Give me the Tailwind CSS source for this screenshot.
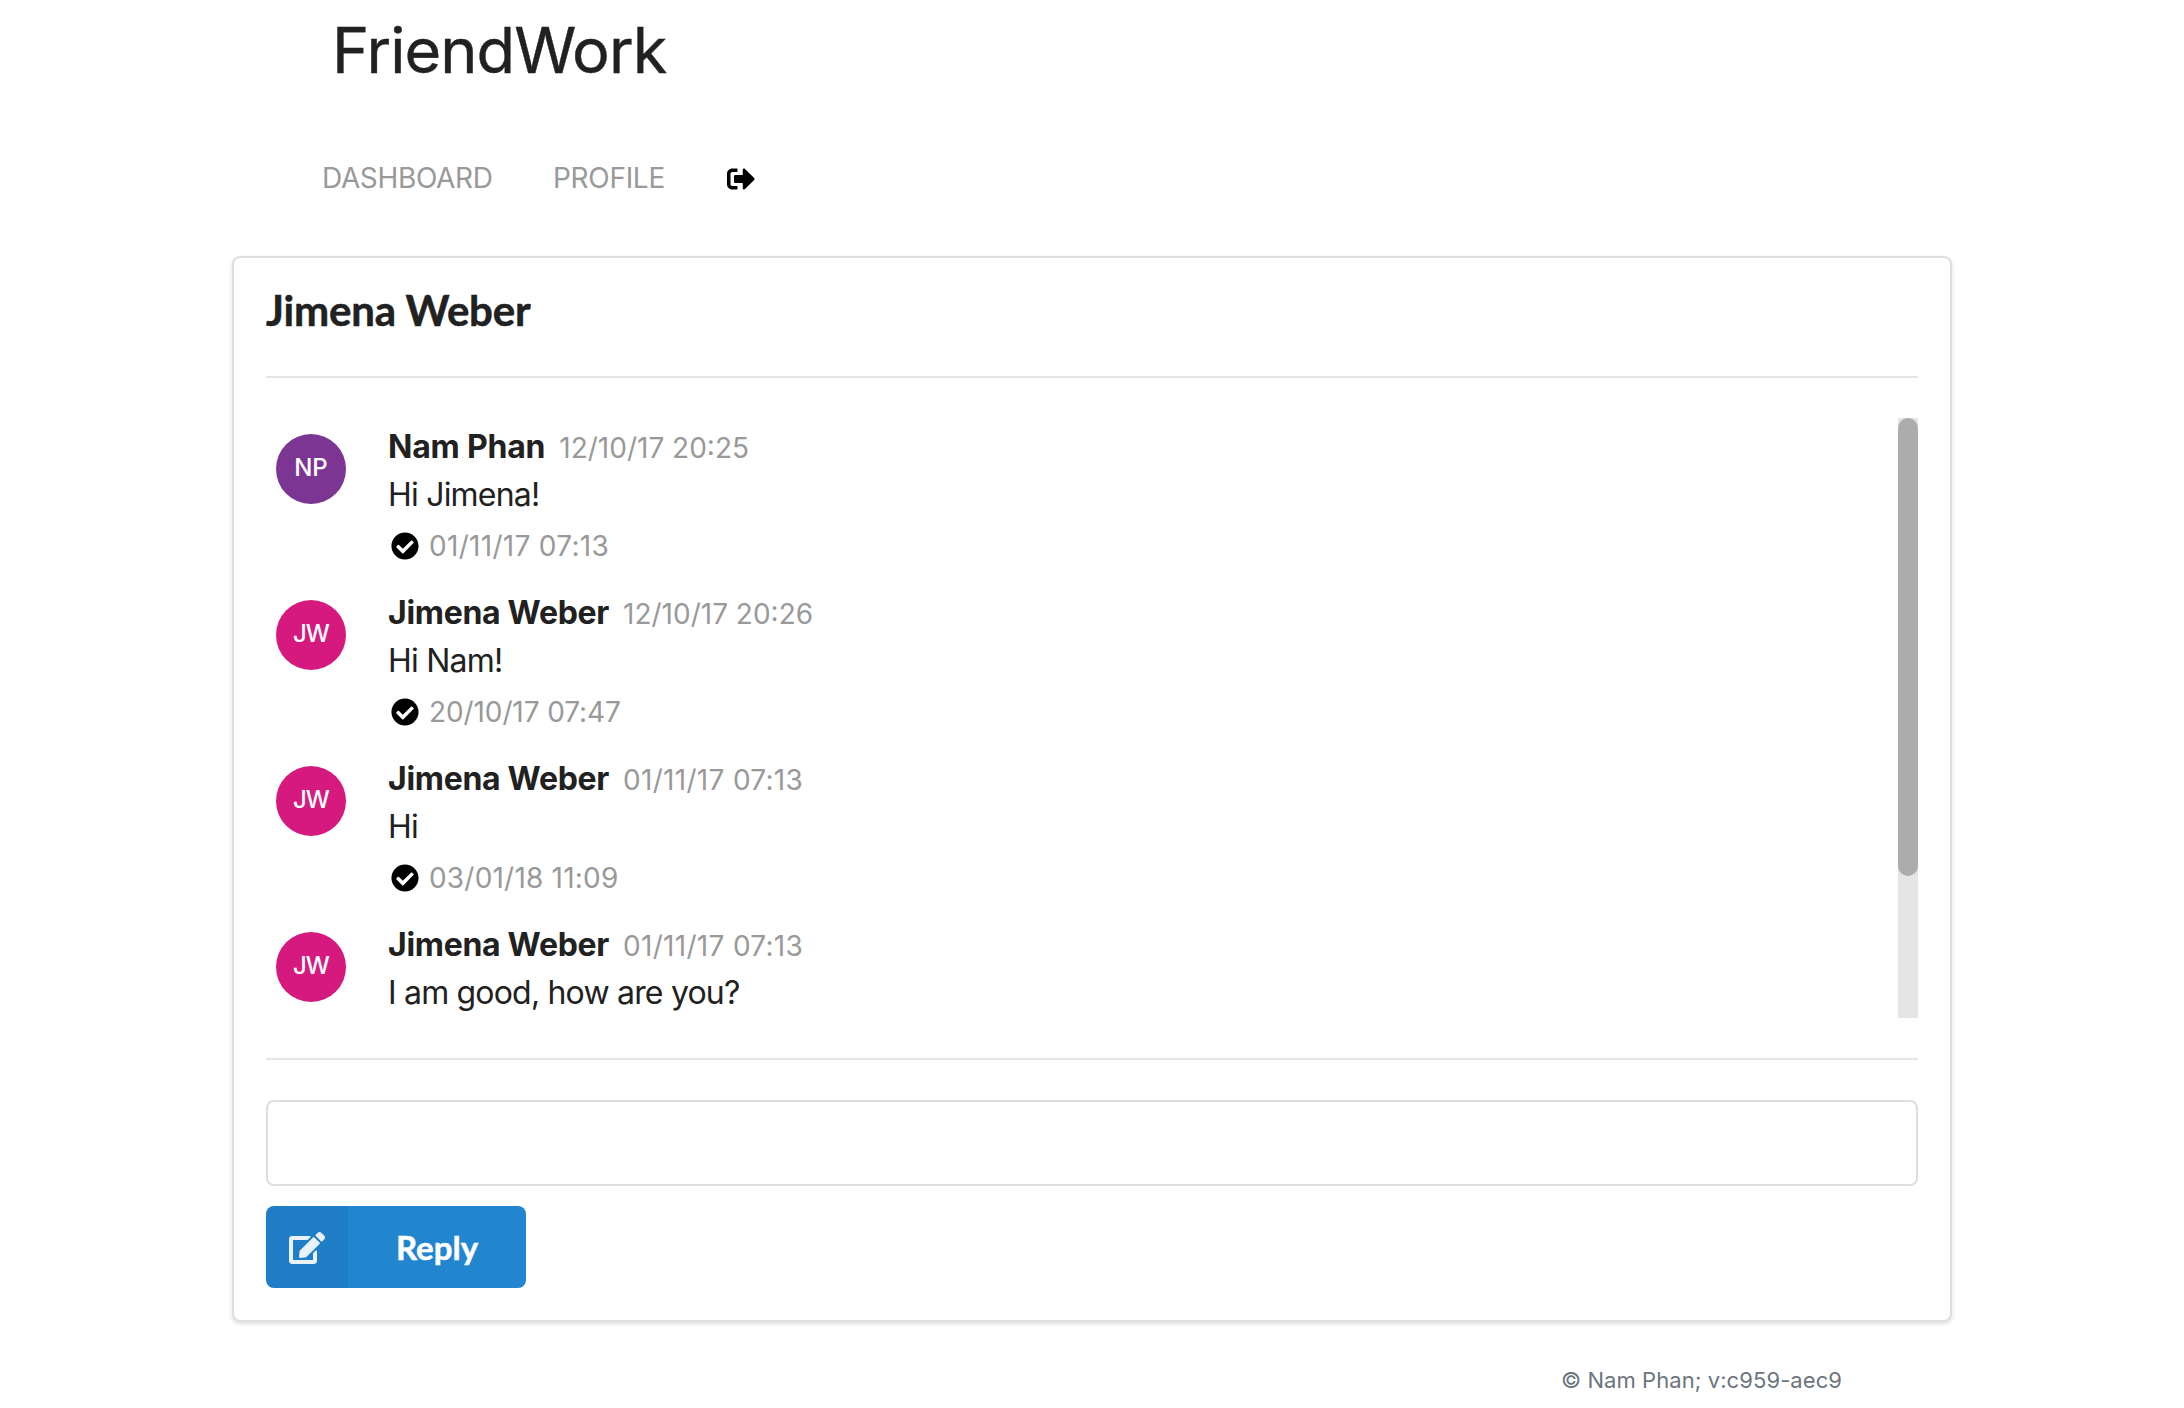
<!DOCTYPE html>
<html lang="en">
<head>
<meta charset="utf-8">
<title>FriendWork</title>
<script src="https://cdn.jsdelivr.net/npm/@tailwindcss/browser@4"></script>
</head>
<body class="bg-white font-['Inter',sans-serif] text-[#212121]">
<svg class="hidden">
  <symbol id="check" viewBox="0 0 512 512"><path d="M504 256c0 136.967-111.033 248-248 248S8 392.967 8 256 119.033 8 256 8s248 111.033 248 248zM227.314 387.314l184-184c6.248-6.248 6.248-16.379 0-22.627l-22.627-22.627c-6.248-6.249-16.379-6.249-22.628 0L216 308.118l-70.059-70.059c-6.248-6.248-16.379-6.248-22.628 0l-22.627 22.627c-6.248 6.248-6.248 16.379 0 22.627l104 104c6.249 6.249 16.379 6.249 22.628.001z"/></symbol>
</svg>
<div class="w-[1720px] ml-[232px]">
  <header>
    <h1 class="pt-[10px] pl-[100px] h-[89px] text-[63px] leading-[80px] tracking-[-0.95px] [-webkit-text-stroke:0.4px]">FriendWork</h1>
    <nav class="flex items-center mt-[69px] pl-[90px] h-10 text-[28px] leading-10 text-[#999]">
      <a class="w-[231px] tracking-[-0.35px]">DASHBOARD</a>
      <a class="w-[174px] tracking-[-0.3px]">PROFILE</a>
      <svg class="size-7 text-black mt-[2px]" viewBox="0 0 512 512" fill="currentColor"><path d="M497 273L329 441c-15 15-41 4.500-41-17v-96H152c-13.300 0-24-10.700-24-24v-96c0-13.300 10.700-24 24-24h136V88c0-21.400 25.900-32 41-17l168 168c9.300 9.400 9.300 24.600 0 34zM192 436v-40c0-6.600-5.400-12-12-12H96c-17.700 0-32-14.300-32-32V160c0-17.700 14.300-32 32-32h84c6.600 0 12-5.400 12-12V76c0-6.600-5.400-12-12-12H96c-53 0-96 43-96 96v192c0 53 43 96 96 96h84c6.600 0 12-5.400 12-12z"/></svg>
    </nav>
  </header>

  <main class="mt-[58px] h-[1066px] rounded-[8px] border-2 border-[#dededf] px-8 shadow-[0_2px_4px_0_rgba(34,36,38,0.15)]">
    <h2 class="h-[118px] pt-[27px] font-['Lato',sans-serif] font-bold text-[42px] leading-[50px] tracking-[-0.2px] [-webkit-text-stroke:0.5px]">Jimena Weber</h2>
    <hr class="border-0 h-[2px] bg-[#e5e5e5]">
    <section class="flex justify-between mt-10 h-[600px] overflow-hidden">
      <div class="pt-1 pl-[10px]">
        <article class="flex h-[166px]">
          <div class="mt-3 mr-[42px] size-[70px] rounded-full bg-[#7c3592] text-white text-center text-[24px] font-medium leading-[68px]">NP</div>
          <div class="pt-px">
            <div class="flex items-baseline h-12 leading-[48px]"><b class="text-[32px] font-bold tracking-[-0.2px] mr-[14px]">Nam Phan</b><time class="text-[28px] text-[#999]">12/10/17 20:25</time></div>
            <p class="h-12 text-[32px] leading-[48px] tracking-[-0.79px]">Hi Jimena!</p>
            <div class="flex items-center h-[54px] ml-[3px] text-[28px] text-[#999]"><svg class="size-7 mr-[10px]" fill="#000"><use href="#check"/></svg><time class="tracking-[0.3px]">01/11/17 07:13</time></div>
          </div>
        </article>
        <article class="flex h-[166px]">
          <div class="mt-3 mr-[42px] size-[70px] rounded-full bg-[#d6197f] text-white text-center text-[24px] font-medium leading-[68px] tracking-[-1px]">JW</div>
          <div class="pt-px">
            <div class="flex items-baseline h-12 leading-[48px]"><b class="text-[32px] font-bold tracking-[-0.3px] mr-[14px]">Jimena Weber</b><time class="text-[28px] text-[#999]">12/10/17 20:26</time></div>
            <p class="h-12 text-[32px] leading-[48px] tracking-[-0.79px]">Hi Nam!</p>
            <div class="flex items-center h-[54px] ml-[3px] text-[28px] text-[#999]"><svg class="size-7 mr-[10px]" fill="#000"><use href="#check"/></svg><time class="tracking-[-0.1px]">20/10/17 07:47</time></div>
          </div>
        </article>
        <article class="flex h-[166px]">
          <div class="mt-3 mr-[42px] size-[70px] rounded-full bg-[#d6197f] text-white text-center text-[24px] font-medium leading-[68px] tracking-[-1px]">JW</div>
          <div class="pt-px">
            <div class="flex items-baseline h-12 leading-[48px]"><b class="text-[32px] font-bold tracking-[-0.3px] mr-[14px]">Jimena Weber</b><time class="text-[28px] text-[#999] tracking-[0.3px]">01/11/17 07:13</time></div>
            <p class="h-12 text-[32px] leading-[48px] tracking-[-0.79px]">Hi</p>
            <div class="flex items-center h-[54px] ml-[3px] text-[28px] text-[#999]"><svg class="size-7 mr-[10px]" fill="#000"><use href="#check"/></svg><time class="tracking-[0.2px]">03/01/18 11:09</time></div>
          </div>
        </article>
        <article class="flex h-[166px]">
          <div class="mt-3 mr-[42px] size-[70px] rounded-full bg-[#d6197f] text-white text-center text-[24px] font-medium leading-[68px] tracking-[-1px]">JW</div>
          <div class="pt-px">
            <div class="flex items-baseline h-12 leading-[48px]"><b class="text-[32px] font-bold tracking-[-0.3px] mr-[14px]">Jimena Weber</b><time class="text-[28px] text-[#999] tracking-[0.3px]">01/11/17 07:13</time></div>
            <p class="h-12 text-[32px] leading-[48px] tracking-[-0.81px]">I am good, how are you?</p>
          </div>
        </article>
      </div>
      <div class="w-5 h-[600px] bg-[#e5e5e5]"><div class="h-[458px] rounded-full bg-[#acacac]"></div></div>
    </section>
    <hr class="border-0 h-[2px] bg-[#e5e5e5] mt-10">
    <input type="text" aria-label="Message" class="block mt-10 w-full h-[86px] rounded-[8px] border-2 border-[#dededf] px-7 text-[28px]">
    <button class="flex mt-5 w-[260px] h-[82px] rounded-[8px] overflow-hidden bg-[#2185d0] text-white font-['Lato',sans-serif] font-bold text-[33px] items-center">
      <span class="flex items-center justify-center w-[82px] h-full bg-black/5"><svg class="w-9 h-8 mt-[2px]" viewBox="0 0 576 512" fill="#fff" fill-opacity="0.9"><path d="M402.600 83.200l90.200 90.200c3.800 3.800 3.800 10 0 13.800L274.400 405.600l-92.800 10.300c-12.400 1.400-22.900-9.100-21.500-21.500l10.300-92.800L388.800 83.200c3.800-3.800 10-3.800 13.800 0zm162-22.900l-48.800-48.800c-15.200-15.200-39.900-15.200-55.200 0l-35.400 35.400c-3.800 3.800-3.800 10 0 13.800l90.200 90.200c3.800 3.800 10 3.800 13.800 0l35.400-35.400c15.200-15.300 15.200-40 0-55.200zM384 346.200V448H64V128h229.800c3.200 0 6.200-1.300 8.500-3.500l40-40c7.600-7.600 2.200-20.500-8.500-20.500H48C21.500 64 0 85.500 0 112v352c0 26.500 21.500 48 48 48h352c26.500 0 48-21.500 48-48V306.200c0-10.700-12.900-16-20.500-8.500l-40 40c-2.200 2.300-3.500 5.300-3.500 8.500z"/></svg></span>
      <span class="flex-1 pt-[2px] text-center [-webkit-text-stroke:0.5px]">Reply</span>
    </button>
  </main>
  <footer class="mt-10 pr-[110px] h-9 text-right text-[22px] leading-9 tracking-[0.07px] text-[#6c757d]">© Nam Phan; v:c959-aec9</footer>
</div>
</body>
</html>
